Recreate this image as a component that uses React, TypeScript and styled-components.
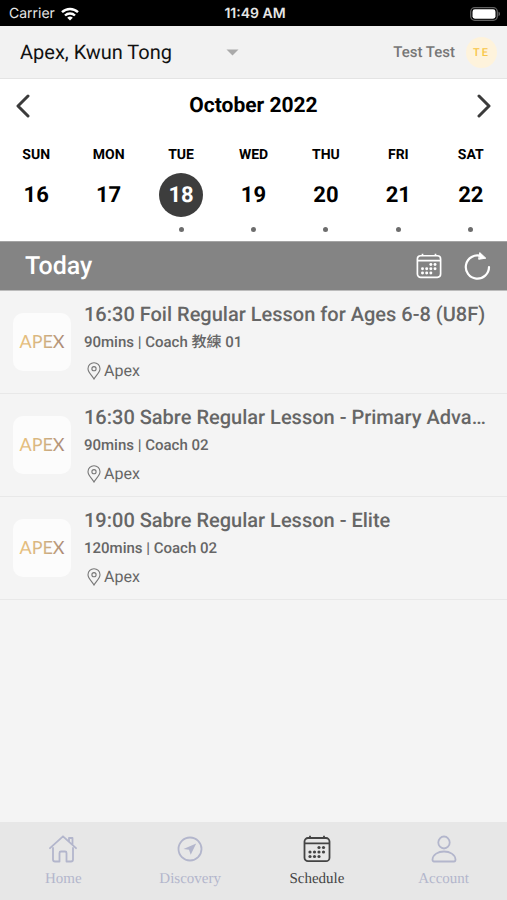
import React from "react";
import styled, { createGlobalStyle } from "styled-components";

const GlobalStyle = createGlobalStyle`
  *, *::before, *::after { box-sizing: border-box; }
  body { margin: 0; background: #f4f4f4; text-rendering: geometricPrecision; }
  button, select { font: inherit; color: inherit; border: 0; padding: 0; margin: 0; background: none; text-rendering: inherit; }
  button { cursor: pointer; }
  h1, h2, h3, p, ul { margin: 0; padding: 0; font: inherit; }
  ul { list-style: none; }
  svg { display: block; flex: none; }
`;

const Screen = styled.div`
  min-height: 100vh;
  display: flex;
  flex-direction: column;
  background: #f4f4f4;
  color: #111;
  font-family: Roboto, "Noto Sans CJK TC", sans-serif;
`;

const StatusBar = styled.div`
  display: grid;
  grid-template-columns: 1fr auto 1fr;
  align-items: center;
  height: 26px;
  padding: 2px 6px 0 9px;
  background: #000;
  color: #e6e6e6;
  font: 14px/24px Inter, sans-serif;
`;

const Carrier = styled.div`
  display: flex;
  align-items: center;
  gap: 6px;
`;

const Clock = styled.div`
  font-size: 14px;
  font-weight: 600;
`;

const BatterySlot = styled.div`
  display: flex;
  justify-content: flex-end;
`;

const Header = styled.header`
  display: flex;
  align-items: center;
  justify-content: space-between;
  height: 53px;
  padding: 0 10px 0 20px;
  background: #f2f2f2;
  border-bottom: 1px solid #e4e4e4;
`;

const LocationField = styled.label`
  display: grid;
  grid-template-columns: 206px 12px;
  align-items: center;
`;

const LocationSelect = styled.select`
  appearance: none;
  font-size: 20px;
  line-height: 28px;
  outline-offset: 4px;
`;

const Profile = styled.button`
  display: flex;
  align-items: center;
  gap: 11px;
  color: #777;
  font-size: 15px;
  font-weight: 500;
`;

const Avatar = styled.span`
  display: grid;
  place-items: center;
  width: 31px;
  height: 31px;
  border-radius: 50%;
  background: #fef3dc;
  color: #f8c646;
  font-size: 11px;
  font-weight: 500;
  letter-spacing: 2px;
`;

const Calendar = styled.section`
  height: 162px;
  background: #fff;
  color: #000;
`;

const MonthRow = styled.div`
  display: flex;
  align-items: center;
  justify-content: space-between;
  height: 54px;
  padding: 0 15px;
`;

const MonthTitle = styled.h1`
  font-size: 21px;
  line-height: 28px;
  font-weight: 700;
`;

const Week = styled.div`
  display: grid;
  grid-template-columns: repeat(7, 1fr);
`;

const Day = styled.button`
  display: flex;
  flex-direction: column;
  align-items: center;
  padding-top: 12px;
`;

const DayName = styled.span`
  font-size: 14px;
  line-height: 20px;
  font-weight: 700;
`;

const DayNumber = styled.span<{ $selected: boolean }>`
  display: grid;
  place-items: center;
  width: 44px;
  height: 44px;
  margin-top: 8px;
  border-radius: 50%;
  background: ${(p) => (p.$selected ? "#3d3d3d" : "transparent")};
  color: ${(p) => (p.$selected ? "#fff" : "#000")};
  font-size: 22px;
  font-weight: 700;
`;

const Dot = styled.span<{ $visible: boolean }>`
  width: 5px;
  height: 5px;
  margin-top: 10px;
  border-radius: 50%;
  background: ${(p) => (p.$visible ? "#6d6d6d" : "transparent")};
`;

const TodayBar = styled.div`
  display: flex;
  align-items: center;
  justify-content: space-between;
  height: 50px;
  padding: 0 16px 0 25px;
  background: #848484;
  border-top: 1px solid #a4a4a4;
  border-bottom: 1px solid #bcbcbc;
  color: #fff;
`;

const TodayTitle = styled.h2`
  font-size: 25px;
  font-weight: 500;
`;

const Actions = styled.div`
  display: flex;
  align-items: center;
  gap: 22px;
`;

const Lesson = styled.li`
  display: flex;
  gap: 13px;
  height: 103px;
  padding: 9px 20px 0 13px;
  border-bottom: 1px solid #e8e8e8;
  color: #666;
`;

const LogoTile = styled.div`
  display: grid;
  place-items: center;
  flex: none;
  width: 58px;
  height: 58px;
  margin-top: 13px;
  border-radius: 10px;
  background: #fcfcfc;
`;

const LessonText = styled.div`
  flex: 1;
  min-width: 0;
`;

const LessonTitle = styled.h3`
  overflow: hidden;
  white-space: nowrap;
  text-overflow: ellipsis;
  font-size: 20px;
  line-height: 28px;
  font-weight: 500;
`;

const LessonMeta = styled.p`
  font-size: 15px;
  line-height: 29px;
  font-weight: 500;
`;

const Place = styled.p`
  display: flex;
  align-items: center;
  gap: 3px;
  padding-left: 3px;
  font-size: 16px;
  line-height: 28px;
`;

const TabBar = styled.nav`
  display: grid;
  grid-template-columns: repeat(4, 1fr);
  height: 78px;
  margin-top: auto;
  background: #e7e7e7;
`;

const Tab = styled.a<{ $active: boolean }>`
  display: flex;
  flex-direction: column;
  align-items: center;
  gap: 6px;
  padding-top: 13px;
  color: ${(p) => (p.$active ? "#444" : "#b3b6cc")};
  font: 15px/20px "Liberation Serif", serif;
  text-decoration: none;
`;

const WifiIcon = () => (
  <svg width="18" height="14" viewBox="0 0 18 14" fill="none" stroke="#fff" strokeWidth="2.4" aria-hidden="true">
    <path d="M1 5.2a11.6 11.6 0 0 1 16 0" />
    <path d="M4 8.5a7.2 7.2 0 0 1 10 0" />
    <path d="M6.2 10.7a4.2 4.2 0 0 1 5.6 0L9 13.6z" fill="#fff" stroke="none" />
  </svg>
);

const BatteryIcon = () => (
  <svg width="31" height="14" viewBox="0 0 31 14" aria-hidden="true">
    <rect x=".7" y=".7" width="26.6" height="12.6" rx="4" fill="none" stroke="#626262" strokeWidth="1.3" />
    <rect x="2.5" y="2.3" width="23" height="9.4" rx="2.4" fill="#fff" />
    <path d="M28.5 4.8c2 .6 2 3.8 0 4.4z" fill="#626262" />
  </svg>
);

const Caret = () => (
  <svg width="13" height="7" viewBox="0 0 13 7" fill="#aaa" aria-hidden="true">
    <path d="M.5.5h12l-6 6z" />
  </svg>
);

const Chevron = ({ d }: { d: string }) => (
  <svg width="16" height="24" viewBox="0 0 16 24" fill="none" stroke="#3b3b3b" strokeWidth="3" strokeLinecap="round" strokeLinejoin="round" aria-hidden="true">
    <path d={d} />
  </svg>
);

const calendarDots = [
  [16, 12.5], [20.5, 12.5],
  [7, 17], [11.5, 17], [16, 17], [20.5, 17],
  [7, 21.5], [11.5, 21.5], [16, 21.5],
];

const CalendarIcon = ({ size }: { size: number }) => (
  <svg width={size} height={size} viewBox="0 0 28 28" fill="none" stroke="currentColor" strokeWidth="1.8" aria-hidden="true">
    <rect x="1.5" y="3" width="25" height="23.2" rx="3.5" />
    <path d="M1.5 8.3h25M7 .8v2.2M21 .8v2.2" />
    <g fill="currentColor" stroke="none">
      {calendarDots.map(([x, y]) => (
        <circle key={`${x}-${y}`} cx={x} cy={y} r="1.6" />
      ))}
    </g>
  </svg>
);

const RefreshIcon = () => (
  <svg width="27" height="28" viewBox="0 0 27 28" fill="none" stroke="#fff" strokeWidth="2.2" strokeLinecap="round" aria-hidden="true">
    <path d="M25 15A11.6 11.6 0 1 1 17 4" />
    <path d="M16 .8 21.8 6.2 15 7.2z" fill="#fff" strokeWidth="1" strokeLinejoin="round" />
  </svg>
);

const PinIcon = () => (
  <svg width="14" height="18" viewBox="0 0 14 18" fill="none" stroke="#777" strokeWidth="1.1" aria-hidden="true">
    <path d="M7 17C5.5 14 1 10.5 1 6.7a6 6 0 0 1 12 0C13 10.5 8.5 14 7 17z" />
    <circle cx="7" cy="6.7" r="2.1" />
  </svg>
);

const ApexLogo = ({ id }: { id: string }) => (
  <svg width="54" height="28" viewBox="0 0 54 28" role="img" aria-label="APEX">
    <defs>
      <linearGradient id={id} x1="0" x2="1">
        <stop offset="0" stopColor="#e9c07c" />
        <stop offset=".55" stopColor="#d3b382" />
        <stop offset="1" stopColor="#a88673" />
      </linearGradient>
    </defs>
    <text x="27" y="20" textAnchor="middle" fontFamily="Lato, sans-serif" fontSize="18" fill={`url(#${id})`}>
      APEX
    </text>
  </svg>
);

const HomeIcon = () => (
  <svg width="28" height="28" viewBox="0 0 28 28" fill="none" stroke="currentColor" strokeWidth="1.8" strokeLinejoin="round" strokeLinecap="round" aria-hidden="true">
    <path d="M4 13v11.5q0 2 2 2h4.500V18q0-1.500 1.500-1.500h4q1.500 0 1.500 1.500v8.500H22q2 0 2-2V13" />
    <path d="M1 13.200 14 1.300l13 11.900M20 6.500V3h3.500v6.500" />
  </svg>
);

const CompassIcon = () => (
  <svg width="28" height="28" viewBox="0 0 28 28" fill="none" stroke="currentColor" strokeWidth="1.8" aria-hidden="true">
    <circle cx="14" cy="14" r="11.5" />
    <path d="M20.200 8.500 7.500 14l5.500.7 1.700 5z" fill="currentColor" stroke="none" />
  </svg>
);

const PersonIcon = () => (
  <svg width="28" height="28" viewBox="0 0 28 28" fill="none" stroke="currentColor" strokeWidth="1.8" strokeLinejoin="round" aria-hidden="true">
    <ellipse cx="14" cy="7.5" rx="5.7" ry="6" />
    <path d="M2.500 24.500C3 19.500 8 16.500 14 16.500s11 3 11.500 8q0 2-1.500 2H4q-1.500 0-1.500-2z" />
  </svg>
);

const days = [
  { name: "SUN", date: 16, lessons: false },
  { name: "MON", date: 17, lessons: false },
  { name: "TUE", date: 18, lessons: true },
  { name: "WED", date: 19, lessons: true },
  { name: "THU", date: 20, lessons: true },
  { name: "FRI", date: 21, lessons: true },
  { name: "SAT", date: 22, lessons: true },
];

const lessons = [
  { title: "16:30 Foil Regular Lesson for Ages 6-8 (U8F)", meta: "90mins | Coach 教練 01" },
  { title: "16:30 Sabre Regular Lesson - Primary Adva…", meta: "90mins | Coach 02" },
  { title: "19:00 Sabre Regular Lesson - Elite", meta: "120mins | Coach 02" },
];

const tabs = [
  { label: "Home", icon: <HomeIcon /> },
  { label: "Discovery", icon: <CompassIcon /> },
  { label: "Schedule", icon: <CalendarIcon size={28} /> },
  { label: "Account", icon: <PersonIcon /> },
];

export default function App() {
  const [selected, setSelected] = React.useState(18);

  return (
    <Screen>
      <GlobalStyle />
      <StatusBar>
        <Carrier>
          Carrier
          <WifiIcon />
        </Carrier>
        <Clock>11:49 AM</Clock>
        <BatterySlot>
          <BatteryIcon />
        </BatterySlot>
      </StatusBar>

      <Header>
        <LocationField>
          <LocationSelect aria-label="Location">
            <option>Apex, Kwun Tong</option>
          </LocationSelect>
          <Caret />
        </LocationField>
        <Profile type="button">
          Test Test
          <Avatar>TE</Avatar>
        </Profile>
      </Header>

      <Calendar>
        <MonthRow>
          <button type="button" aria-label="Previous week">
            <Chevron d="M13 2 3 12l10 10" />
          </button>
          <MonthTitle>October 2022</MonthTitle>
          <button type="button" aria-label="Next week">
            <Chevron d="M3 2l10 10L3 22" />
          </button>
        </MonthRow>
        <Week>
          {days.map((day) => (
            <Day key={day.date} type="button" aria-pressed={day.date === selected} onClick={() => setSelected(day.date)}>
              <DayName>{day.name}</DayName>
              <DayNumber $selected={day.date === selected}>{day.date}</DayNumber>
              <Dot $visible={day.lessons} />
            </Day>
          ))}
        </Week>
      </Calendar>

      <TodayBar>
        <TodayTitle>Today</TodayTitle>
        <Actions>
          <button type="button" aria-label="Open calendar">
            <CalendarIcon size={26} />
          </button>
          <button type="button" aria-label="Refresh">
            <RefreshIcon />
          </button>
        </Actions>
      </TodayBar>

      <ul>
        {lessons.map((lesson, index) => (
          <Lesson key={lesson.title}>
            <LogoTile>
              <ApexLogo id={`apex-gold-${index}`} />
            </LogoTile>
            <LessonText>
              <LessonTitle>{lesson.title}</LessonTitle>
              <LessonMeta>{lesson.meta}</LessonMeta>
              <Place>
                <PinIcon />
                Apex
              </Place>
            </LessonText>
          </Lesson>
        ))}
      </ul>

      <TabBar>
        {tabs.map((tab) => (
          <Tab key={tab.label} href={`#${tab.label.toLowerCase()}`} $active={tab.label === "Schedule"}>
            {tab.icon}
            {tab.label}
          </Tab>
        ))}
      </TabBar>
    </Screen>
  );
}
